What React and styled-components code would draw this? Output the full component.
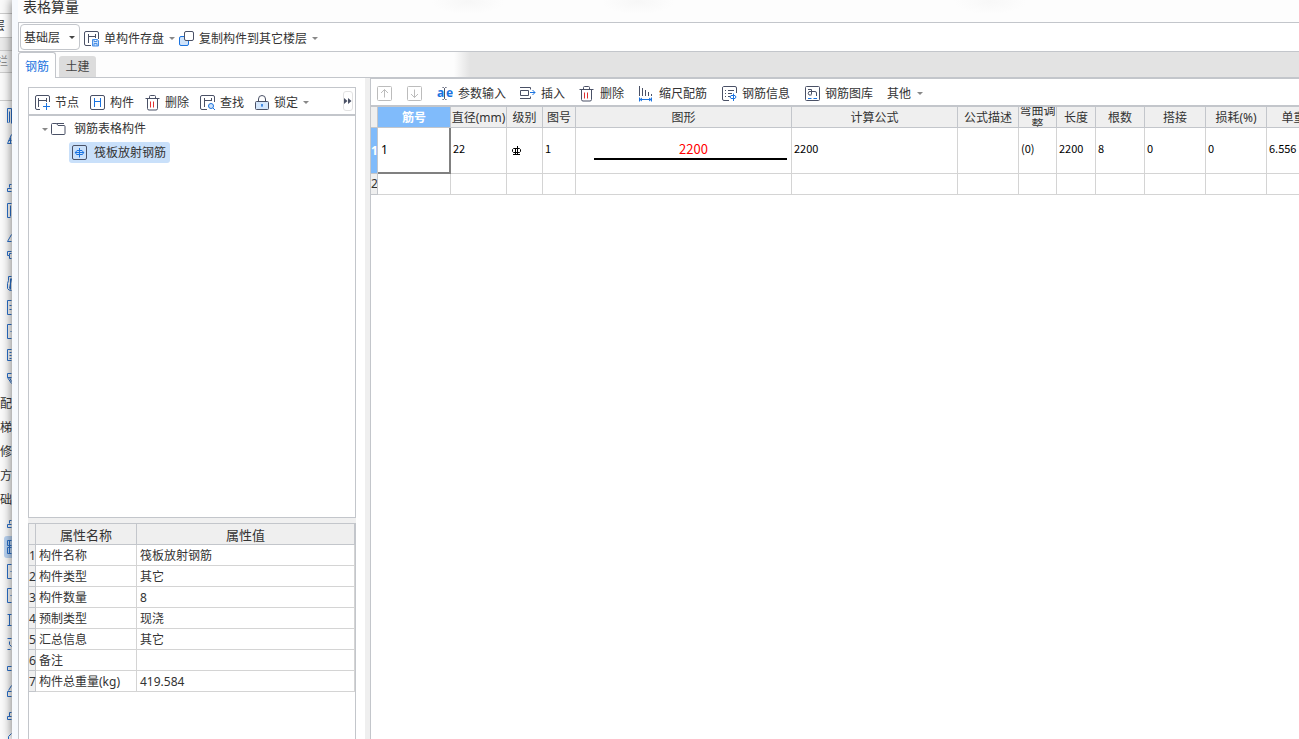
import React, { useState } from 'react';
import styled, { createGlobalStyle, css } from 'styled-components';

const GlobalStyle = createGlobalStyle`
  * {
    box-sizing: border-box;
  }
  body {
    margin: 0;
    overflow: hidden;
    color: #333;
    font-family: 'Noto Sans', 'Noto Sans CJK SC', sans-serif;
    font-size: 12px;
    line-height: 16px;
  }
  button, select {
    font: inherit;
    color: inherit;
    border: 0;
    padding: 0;
    margin: 0;
    background: none;
  }
`;

const line = '#c3c6cb';
const ink = '#4a5166';
const blue = '#1a73e0';

const Screen = styled.div`
  display: flex;
  height: 100vh;
  overflow: hidden;
`;

/* main window behind the dialog */

const Behind = styled.aside`
  flex: 0 0 12px;
  overflow: hidden;
  background: #fafafa;
`;

const Strip = styled.div`
  display: flex;
  justify-content: flex-end;
  align-items: center;
  height: ${p => p.$height}px;
  padding-top: 1px;
  padding-right: ${p => p.$right || 0}px;
  border-bottom: 1px solid #ccc;
  background: ${p => p.$bg || '#fafafa'};
  color: ${p => p.$color || '#333'};
  white-space: nowrap;
`;

const ModuleList = styled.ul`
  list-style: none;
  margin: 0;
  padding: 2px 0 0;
`;

const Module = styled.li`
  display: flex;
  justify-content: flex-end;
  align-items: center;
  height: 24px;
  padding-top: ${p => (p.$text ? 2 : 0)}px;
  white-space: nowrap;
  svg {
    flex: none;
    border-radius: 3px 0 0 3px;
    background: ${p => (p.$active ? '#b9d3f2' : 'none')};
  }
`;

/* dialog */

const Dialog = styled.main`
  display: flex;
  flex-direction: column;
  flex: 1;
  min-width: 0;
  padding-left: 6px;
  position: relative;
  background: linear-gradient(to right, #f6f9fd 6px, #fdfdfd 6px);
  box-shadow: 0 0 10px rgba(0, 0, 0, 0.55);
`;

const Title = styled.h1`
  flex: none;
  height: 22px;
  margin: 0;
  padding-left: 5px;
  font-size: 14px;
  font-weight: normal;
  line-height: 14px;
  background:
    radial-gradient(ellipse 36px 12px at 450px 2px, #f7f7f7, transparent),
    radial-gradient(ellipse 36px 12px at 620px 2px, #f7f7f7, transparent),
    radial-gradient(ellipse 36px 12px at 972px 2px, #f8f8f8, transparent);
`;

const MainBar = styled.div`
  display: flex;
  align-items: center;
  flex: none;
  gap: 4px;
  height: 30px;
  padding-left: 1px;
  border: 1px solid ${line};
  border-right: 0;
  background: #fff;
`;

const Combo = styled.label`
  display: flex;
  align-items: center;
  position: relative;
  width: 60px;
  height: 26px;
  border: 1px solid ${line};
  border-radius: 4px;
  select {
    appearance: none;
    width: 100%;
    height: 100%;
    padding: 2px 0 0 3px;
    outline: none;
  }
`;

const Arrow = styled.i`
  flex: none;
  border: 3px solid transparent;
  border-top-color: ${p => p.$color || '#888'};
  border-bottom: 0;
  ${p => p.$over && css`
    position: absolute;
    right: 4px;
    pointer-events: none;
  `}
`;

const Tool = styled.button`
  display: flex;
  align-items: center;
  flex: none;
  gap: 5px;
  height: 24px;
  padding-top: 3px;
  white-space: nowrap;
  svg {
    flex: none;
  }
`;

const Tabs = styled.div`
  display: flex;
  align-items: flex-end;
  flex: none;
  gap: 3px;
  height: 26px;
  box-shadow: inset 0 -1px ${line};
  background: linear-gradient(to right, #fdfdfd 436px, #e3e3e3 452px);
`;

const Tab = styled.button`
  width: 37px;
  height: 22px;
  padding-top: 1px;
  border-radius: 3px 3px 0 0;
  background: #dcdcdc;
  color: #444;
  background-clip: padding-box;
  border-bottom: 1px solid ${line};
  ${p => p.$active && css`
    width: 38px;
    height: 26px;
    padding-top: 2px;
    border: 1px solid ${line};
    border-bottom: 0;
    background: #fff;
    color: ${blue};
  `}
`;

const Body = styled.div`
  display: flex;
  flex: 1;
  min-height: 0;
  border-left: 1px solid ${line};
  background: #fff;
`;

const Side = styled.section`
  display: grid;
  grid-template-rows: 2fr 1fr;
  gap: 5px;
  flex: 0 0 328px;
  margin: 9px 9px 0;
  background: #f0f0f0;
`;

const Splitter = styled.div`
  flex: 0 0 5px;
  background: #efefef;
`;

const Panel = styled.div`
  min-height: 0;
  overflow: hidden;
  border: 1px solid ${line};
  ${p => p.$open && 'border-bottom: 0;'}
  background: #fff;
`;

const SideBar = styled.div`
  display: flex;
  align-items: center;
  gap: 11px;
  height: 28px;
  padding: 0 2px 0 6px;
  border-bottom: 2px solid ${line};
  ${Arrow} {
    margin: 2px 0 0 -6px;
  }
`;

const More = styled.button`
  display: flex;
  align-items: center;
  justify-content: center;
  width: 10px;
  height: 20px;
  margin-left: auto;
  border: 1px solid #e2e2e2;
  border-radius: 3px;
`;

const Tree = styled.ul`
  list-style: none;
  margin: 0;
  padding: 0;
`;

const Branch = styled.li`
  display: flex;
  align-items: center;
  gap: 3px;
  height: 26px;
  padding: 0 0 0 13px;
`;

const Folder = styled.span`
  display: flex;
  align-items: center;
  gap: 8px;
`;

const Leaf = styled.li`
  display: flex;
  padding-left: 40px;
`;

const LeafButton = styled.button`
  display: flex;
  align-items: center;
  gap: 7px;
  height: 21px;
  padding: 0 4px 0 3px;
  border-radius: 3px;
  background: #c9e0fa;
`;

const PropTable = styled.table`
  width: 100%;
  table-layout: fixed;
  border-spacing: 0;
  th, td {
    height: 21px;
    padding: 2px 3px 0;
    border-right: 1px solid #d4d4d4;
    border-bottom: 1px solid #d4d4d4;
    font-weight: normal;
    text-align: left;
    white-space: nowrap;
  }
  thead th {
    background: #efefef;
    border-color: ${line};
    font-size: 13px;
    text-align: center;
  }
  tbody th {
    padding: 2px 0 0;
    background: #efefef;
    border-color: ${line};
  }
`;

const Work = styled.section`
  flex: 1;
  min-width: 0;
  overflow: hidden;
  border-left: 1px solid ${line};
  border-top: 1px solid ${line};
`;

const WorkBar = styled.div`
  display: flex;
  align-items: center;
  gap: 14px;
  height: 28px;
  padding-left: 6px;
  border-bottom: 2px solid ${line};
  ${Arrow} {
    margin: 2px 0 0 -8px;
  }
`;

const Grid = styled.table`
  width: 971px;
  table-layout: fixed;
  border-spacing: 0;
  th, td {
    padding: 0;
    border-right: 1px solid #d4d4d4;
    border-bottom: 1px solid #d4d4d4;
    font-weight: normal;
    overflow: hidden;
  }
  td {
    padding: 0 2px 6px;
    color: #000;
    font-family: 'Noto Sans CJK SC', sans-serif;
    font-size: 11px;
    line-height: 14px;
    white-space: nowrap;
  }
`;

const Head = styled.th`
  background: ${p => (p.$active ? '#80bbfb' : '#efefef')};
  && {
    border-color: ${line};
    ${p => p.$active && 'color: #fff; font-weight: bold;'}
  }
`;

const HeadText = styled.div`
  display: flex;
  align-items: center;
  justify-content: center;
  height: 20px;
  padding-top: 2px;
  overflow: hidden;
  line-height: 14px;
  text-align: center;
  word-break: break-all;
`;

const Row = styled.tr`
  height: ${p => p.$height}px;
`;

const Current = styled.td`
  && {
    padding: 0 3px;
    border-right: 2px solid #808080;
    border-bottom: 2px solid #808080;
    font-family: 'Noto Sans', sans-serif;
    font-size: 12px;
  }
`;

const Shape = styled.div`
  margin: 4px 2px 0 16px;
  padding-left: 6px;
  border-bottom: 2px solid #000;
  color: #f00;
  font-size: 13px;
  line-height: 18px;
  text-align: center;
`;

const Grade = styled.svg`
  display: block;
  margin: 6px 0 0 3px;
`;

const Icon = ({ w = 16, children }) => (
  <svg width={w} height="16" viewBox={`0 0 ${w} 16`} fill="none" stroke={ink} aria-hidden="true">
    {children}
  </svg>
);

const SaveIcon = () => (
  <Icon w={15}>
    <path d="M14.5 8V2a1.5 1.5 0 0 0-1.500-1.500H2A1.500 1.500 0 0 0 .5 2v11A1.500 1.500 0 0 0 2 14.500h5M4.500 3v9M4.500 5.500h7M11.500 3v4" />
    <path d="M8.500 8.500h5l1 1v5.500h-6zM10 8.500v2h3v-2M10 15v-2.500h3V15" stroke="#4a90e8" fill="#cfe3fa" />
  </Icon>
);

const CopyIcon = () => (
  <Icon w={15}>
    <rect x=".5" y="5.500" width="9" height="9" rx="1.500" stroke={blue} fill="#cfe3fa" />
    <rect x="5.500" y=".5" width="9" height="9" rx="1.500" fill="#fff" />
  </Icon>
);

const NodeIcon = () => (
  <Icon w={15}>
    <path d="M14.500 7V2A1.500 1.500 0 0 0 13 .5H2A1.500 1.500 0 0 0 .5 2v11A1.500 1.500 0 0 0 2 14.500h3M3.500 3v9M3.500 5.500h8M11.500 3v4" />
    <path d="M11.500 8v7M8 11.500h7" stroke={blue} />
  </Icon>
);

const PartIcon = () => (
  <Icon w={15}>
    <rect x=".5" y=".5" width="14" height="14" rx="1.500" />
    <path d="M4.500 3v9M10.500 3v9M4.500 6.500h6" stroke={blue} />
  </Icon>
);

const TrashIcon = ({ w = 15 }) => (
  <Icon w={w}>
    <path d="M0.500 3.500h14M4.500 3.500v-2a1 1 0 0 1 1-1h4a1 1 0 0 1 1 1v2M2.500 3.500v10a1.500 1.500 0 0 0 1.500 1.500h7a1.500 1.500 0 0 0 1.500-1.500v-10" />
    <path d="M5.500 6.500v6M8.500 6.500v6" stroke="#e03030" />
  </Icon>
);

const FindIcon = () => (
  <Icon w={15}>
    <path d="M14.500 7V2A1.500 1.500 0 0 0 13 .5H2A1.500 1.500 0 0 0 .5 2v11A1.500 1.500 0 0 0 2 14.500h5M4.500 3v9M4.500 5.500h7M11.500 3v3" />
    <circle cx="11" cy="11" r="2.500" stroke={blue} fill="#cfe3fa" />
    <path d="M13 13l2 2" stroke={blue} />
  </Icon>
);

const LockIcon = () => (
  <Icon w={14}>
    <path d="M3.500 6.500V4a3.500 3.500 0 0 1 7 0v2.500" />
    <rect x=".5" y="6.500" width="13" height="8" rx="1" fill="#d5e7fc" />
    <path d="M7 9v3M6 10h2" stroke={blue} />
  </Icon>
);

const FolderIcon = () => (
  <Icon w={15}>
    <path d="M.5 3.500a1 1 0 0 1 1-1h4l1.500 2h6a1 1 0 0 1 1 1v7a1 1 0 0 1-1 1h-11.500a1 1 0 0 1-1-1zM5.500 2.500h7.500" />
  </Icon>
);

const RebarIcon = () => (
  <Icon w={15}>
    <rect x=".5" y=".5" width="14" height="14" rx="1.500" />
    <path d="M7.500 3v9.500M5 5.500h5M10.500 9.500h-6M5 5.500Q2 7.500 4.500 9.500M10 5.500q3 2 .5 4M3 7.500h9" stroke={blue} />
  </Icon>
);

const MoveIcon = ({ down }) => (
  <Icon>
    <g stroke="#bcbcbc">
      <rect x=".5" y=".5" width="14" height="14" rx="1" />
      <path d={down ? 'M7.500 3.500v8M4 8l3.500 3.500L11 8' : 'M7.500 11.500v-8M4 7l3.500-3.500L11 7'} />
    </g>
  </Icon>
);

// the two letters stay text, only the cursor is drawn
const ParamIcon = () => (
  <Icon>
    <text x="0" y="11" fontSize="12" fontWeight="bold" fill={blue} stroke="none">a</text>
    <text x="9" y="11" fontSize="12" fontWeight="bold" fill={blue} stroke="none">e</text>
    <path d="M5.500 1.500h1l1 1 1-1h1M7.500 2.500v10M5.500 13.500h1l1-1 1 1h1" />
  </Icon>
);

const InsertIcon = () => (
  <Icon>
    <path d="M0 1.500h10.500v2M.5 4.500h8v5h-8zM0 12.500h10.500v-2" />
    <path d="M10 6.500h5M12.500 4l2.500 2.500L12.500 9" stroke={blue} />
  </Icon>
);

const ScaleIcon = () => (
  <Icon>
    <path d="M1.500 0v10M4.500 2v8M7.500 4v6M10.500 6v4M13.500 8v2" />
    <path d="M1.500 11.500v4M13.500 11.500v4M1.500 13.500h12M4 12l-2 1.500L4 15M11 12l2 1.500-2 1.500" stroke={blue} />
  </Icon>
);

const InfoIcon = () => (
  <Icon>
    <path d="M15.500 7V2A1.500 1.500 0 0 0 14 .5H2.500A1.500 1.500 0 0 0 1.500 2v11a1.500 1.500 0 0 0 1.500 1.500H8M4 4.500h1M7 4.500h6M4 7.500h1M7 7.500h4M4 10.500h1M7 10.500h2" />
    <path d="M12.500 7.500v7.500M10 9.500h4q2 1.500 0 3h-4q-2-1.500 0-3" stroke={blue} />
  </Icon>
);

const LibraryIcon = () => (
  <Icon>
    <rect x="1.500" y=".5" width="14" height="14" rx="1" />
    <path d="M4 3.500h3.500v5M7.500 5.500H5q-1.500 2 0 3.500h2.500M7.500 5.500h3.500a1.500 1.500 0 0 1 1.500 1.500v3" />
    <path d="M4 12.500h3.500M9.500 12.500h3.500" stroke={blue} />
  </Icon>
);

const GradeIcon = () => (
  <Grade width="10" height="10" viewBox="0 0 10 10" fill="none" stroke="#000" role="img" aria-label="级别">
    <path d="M1.500 2.500h6M1.500 2.500l-1 1v2l1 1M7.500 2.500l1 1v2l-1 1M1.500 6.500h6M1 8.500h7M3.500 2v7M5.500 0v9" />
  </Grade>
);

const MoreIcon = () => (
  <svg width="8" height="6" viewBox="0 0 8 6" fill={ink} aria-hidden="true">
    <path d="M0 0l3.500 3L0 6zM4 0l3.500 3L4 6z" />
  </svg>
);

// left edges of the module icons, the dialog covers the rest
const modules = [
  { d: 'M5 20V5h-4v14h1M3 19V8' },
  { d: 'M5 7L1 16h4M2 13h3M4 10v6' },
  {},
  { d: 'M5 9H3v3M1 16v-3h4M1 16h4' },
  { d: 'M5 4H1v14h3M4 17V6' },
  { d: 'M5 11L1 18h4' },
  { d: 'M5 4H1v4h2V6h2M3 8v3h2' },
  { d: 'M5 5H2v4L1 12v5q1 2 4 2M5 7L3 17M4 7v11' },
  { d: 'M5 5H1v14h4M3 10h2M3 14h2' },
  { d: 'M5 5H1v14h4M4 12h1' },
  { d: 'M5 6H1v11h4M3 9h2M3 12h2M3 15h2' },
  { d: 'M5 6H1v4h4M1 10l4 6M3 10l2 4' },
  { text: '配' },
  { text: '梯' },
  { text: '修' },
  { text: '方' },
  { text: '础' },
  { d: 'M5 9H3v3M1 16v-3h4M1 16h4' },
  { d: 'M1 5h4M1 5v5h4M1 12h4M1 12v6h4M3 5v13', active: true },
  { d: 'M5 5H1v14h4M4 12h1' },
  { d: 'M5 5H1v14h4M4 12h1' },
  { d: 'M1 7h4M3 7v11M1 18h4' },
  { d: 'M1 7h4M3 10v3l2 2M1 18h3' },
  { d: 'M5 11H1v4h4' },
  { d: 'M5 6L2 11M1 12h4M1 12v5h4' },
  { d: 'M5 9H3v4M1 16v-3h4M1 16h4' },
  { d: 'M5 6L2 9v8' },
];

const properties = [
  ['构件名称', '筏板放射钢筋'],
  ['构件类型', '其它'],
  ['构件数量', '8'],
  ['预制类型', '现浇'],
  ['汇总信息', '其它'],
  ['备注', ''],
  ['构件总重量(kg)', '419.584'],
];

const columns = [
  ['筋号', 73],
  ['直径(mm)', 56],
  ['级别', 36],
  ['图号', 33],
  ['图形', 216],
  ['计算公式', 166],
  ['公式描述', 61],
  ['弯曲调整', 38],
  ['长度', 39],
  ['根数', 49],
  ['搭接', 61],
  ['损耗(%)', 61],
  ['单重(kg)', 75],
];

const Modules = () => (
  <Behind>
    <Strip $height={14} />
    <Strip $height={24} $right={7} $bg="#fff">层</Strip>
    <Strip $height={13} $bg="#ebebeb" />
    <Strip $height={22} $right={4} $bg="#f0f0f0" $color="#888">栏</Strip>
    <Strip $height={28} />
    <ModuleList>
      {modules.map((m, i) => (
        <Module key={i} $active={m.active} $text={m.text}>
          {m.text}
          {m.d && (
            <svg width={m.active ? 8 : 5} height="22" viewBox={m.active ? '-3 1 8 22' : '0 1 5 22'} fill="none" stroke="#2a6fc9">
              <path d={m.d} transform="translate(-.5 .5)" />
            </svg>
          )}
        </Module>
      ))}
    </ModuleList>
  </Behind>
);

const Properties = () => (
  <Panel $open>
    <PropTable>
      <colgroup>
        <col style={{ width: 7 }} />
        <col style={{ width: 101 }} />
        <col />
      </colgroup>
      <thead>
        <tr><th /><th>属性名称</th><th>属性值</th></tr>
      </thead>
      <tbody>
        {properties.map(([name, value], i) => (
          <tr key={name}>
            <th>{i + 1}</th>
            <td>{name}</td>
            <td>{value}</td>
          </tr>
        ))}
      </tbody>
    </PropTable>
  </Panel>
);

const BarGrid = () => (
  <Grid>
    <colgroup>
      <col style={{ width: 7 }} />
      {columns.map(([name, width]) => <col key={name} style={{ width }} />)}
    </colgroup>
    <thead>
      <tr>
        <Head />
        {columns.map(([name], i) => (
          <Head key={name} $active={i === 0}><HeadText>{name}</HeadText></Head>
        ))}
      </tr>
    </thead>
    <tbody>
      <Row $height={46}>
        <Head $active>1</Head>
        <Current>1</Current>
        <td>22</td>
        <td><GradeIcon /></td>
        <td>1</td>
        <td><Shape>2200</Shape></td>
        <td>2200</td>
        <td />
        <td>(0)</td>
        <td>2200</td>
        <td>8</td>
        <td>0</td>
        <td>0</td>
        <td>6.556</td>
      </Row>
      <Row $height={21}>
        <Head>2</Head>
        {columns.map(([name]) => <td key={name} />)}
      </Row>
    </tbody>
  </Grid>
);

const App = () => {
  const [tab, setTab] = useState('钢筋');

  return (
    <Screen>
      <GlobalStyle />
      <Modules />
      <Dialog>
        <Title>表格算量</Title>
        <MainBar>
          <Combo>
            <select aria-label="楼层" defaultValue="基础层">
              <option>基础层</option>
            </select>
            <Arrow $over $color="#444" />
          </Combo>
          <Tool><SaveIcon />单构件存盘<Arrow /></Tool>
          <Tool><CopyIcon />复制构件到其它楼层<Arrow /></Tool>
        </MainBar>
        <Tabs>
          {['钢筋', '土建'].map(name => (
            <Tab key={name} $active={name === tab} onClick={() => setTab(name)}>{name}</Tab>
          ))}
        </Tabs>
        <Body>
          <Side>
            <Panel>
              <SideBar>
                <Tool><NodeIcon />节点</Tool>
                <Tool><PartIcon />构件</Tool>
                <Tool><TrashIcon />删除</Tool>
                <Tool><FindIcon />查找</Tool>
                <Tool><LockIcon />锁定</Tool>
                <Arrow />
                <More aria-label="更多"><MoreIcon /></More>
              </SideBar>
              <Tree>
                <Branch>
                  <Arrow />
                  <Folder><FolderIcon />钢筋表格构件</Folder>
                </Branch>
                <Leaf>
                  <LeafButton><RebarIcon />筏板放射钢筋</LeafButton>
                </Leaf>
              </Tree>
            </Panel>
            <Properties />
          </Side>
          <Splitter />
          <Work>
            <WorkBar>
              <Tool aria-label="上移"><MoveIcon /></Tool>
              <Tool aria-label="下移"><MoveIcon down /></Tool>
              <Tool><ParamIcon />参数输入</Tool>
              <Tool><InsertIcon />插入</Tool>
              <Tool><TrashIcon w={16} />删除</Tool>
              <Tool><ScaleIcon />缩尺配筋</Tool>
              <Tool><InfoIcon />钢筋信息</Tool>
              <Tool><LibraryIcon />钢筋图库</Tool>
              <Tool>其他</Tool>
              <Arrow />
            </WorkBar>
            <BarGrid />
          </Work>
        </Body>
      </Dialog>
    </Screen>
  );
};

export default App;
